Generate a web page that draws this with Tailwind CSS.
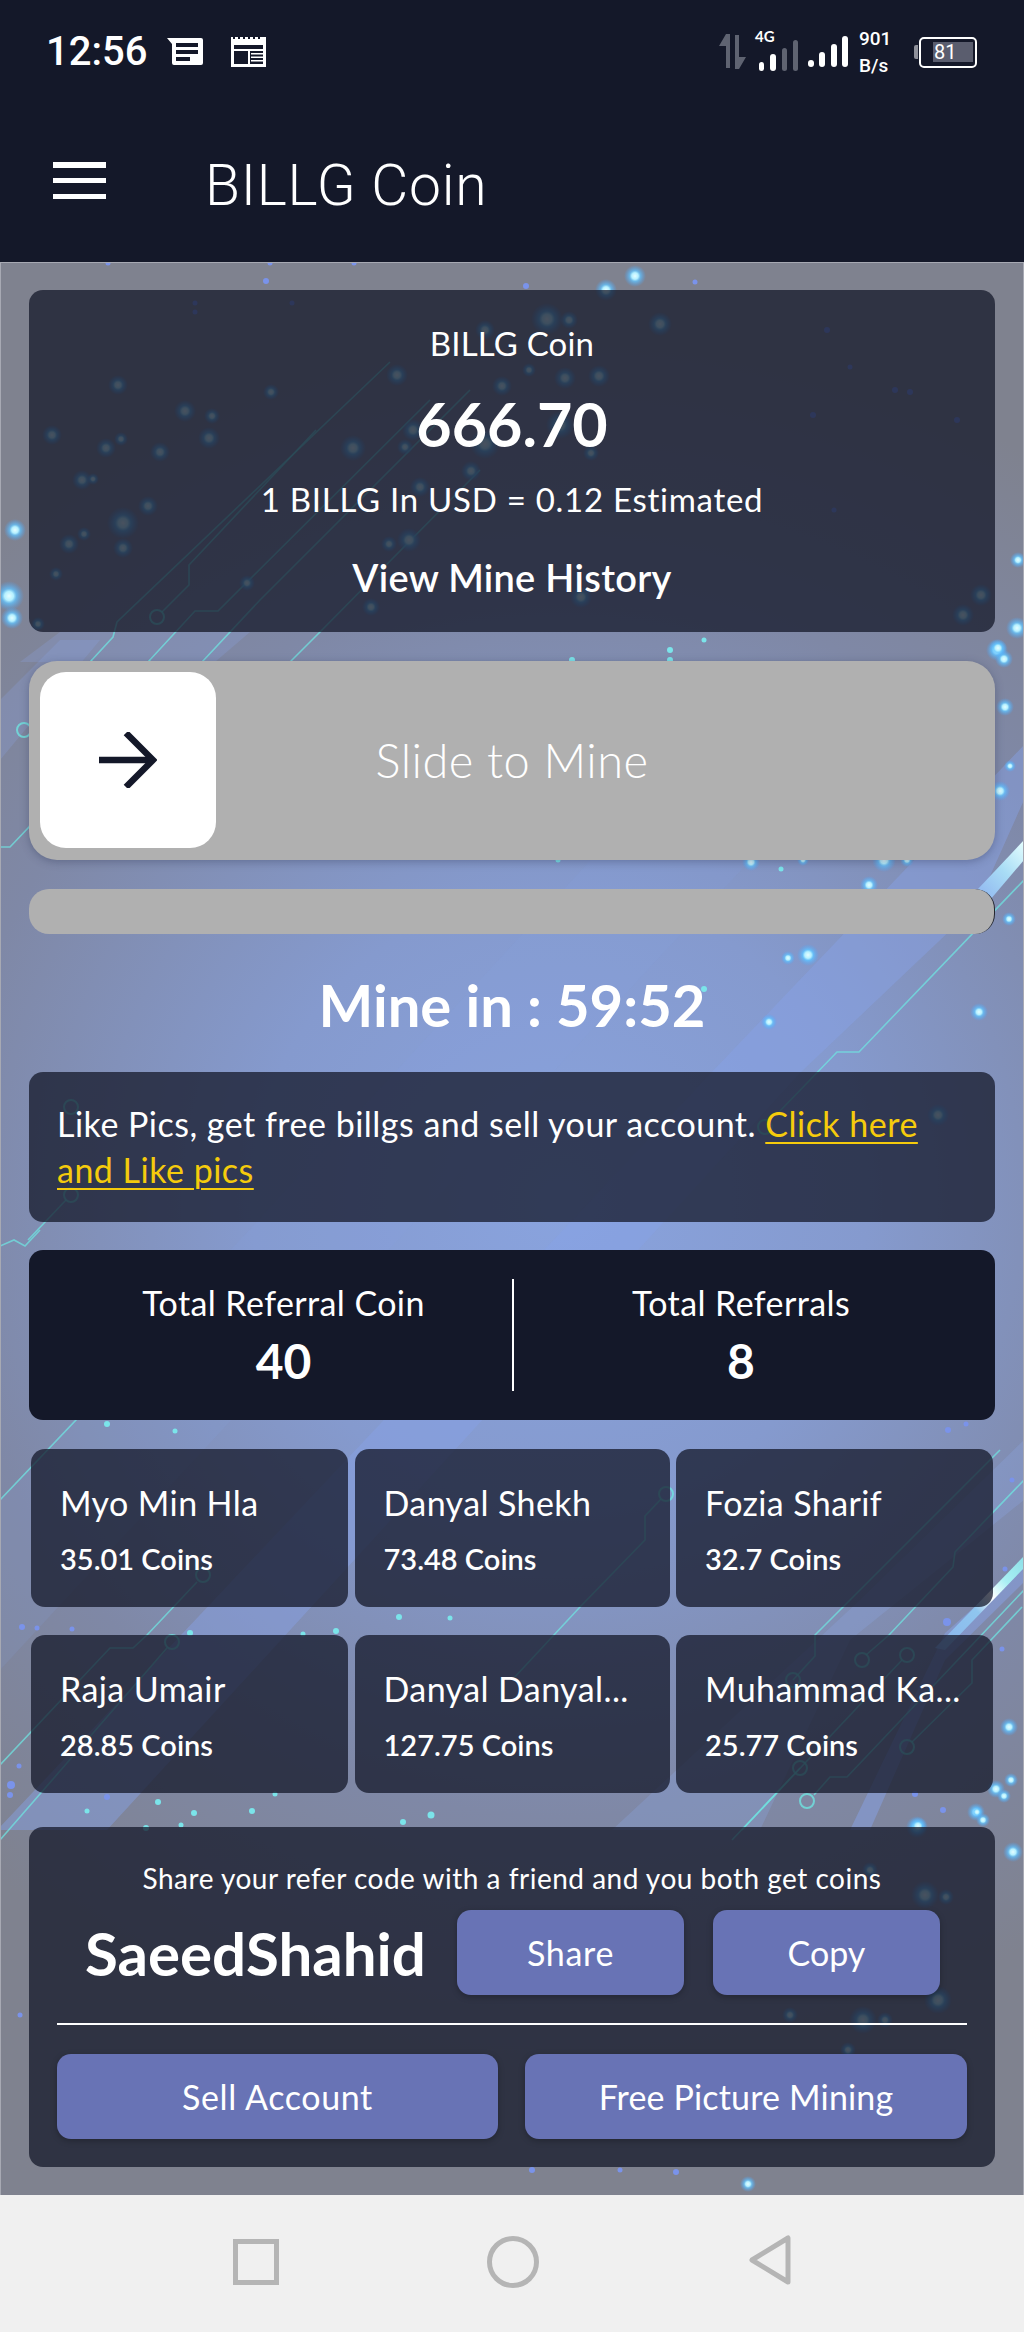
<!DOCTYPE html>
<html lang="en">
<head>
<meta charset="utf-8">
<title>BILLG Coin</title>
<script src="https://cdn.jsdelivr.net/npm/@tailwindcss/browser@4"></script>
</head>
<body class="m-0 bg-[#f0f0f0]">
<div class="flex h-[2332px] w-[1024px] flex-col overflow-hidden font-['Lato',sans-serif] text-white">

  <!-- Status bar + app bar -->
  <header class="flex h-[262px] flex-col bg-[#141829]">
    <div class="flex h-[104px] items-center justify-between pl-[46px] pr-[47px]">
      <div class="flex items-center">
        <span class="font-['Roboto',sans-serif] text-[40px] font-medium leading-none">12:56</span>
        <svg class="ml-[19px]" width="38" height="30" viewBox="0 0 38 30"><path d="M1 1H35a2 2 0 0 1 2 2V26a2 2 0 0 1-2 2H8a2 2 0 0 1-2-2V7Z" fill="#fff"/><path d="M10 6H32V10H10ZM10 13H32V17H10ZM10 20H24V24H10Z" fill="#141829"/></svg>
        <svg class="ml-[26px]" width="37" height="32" viewBox="0 0 37 32"><path d="M1 1H36V31H1Z" fill="#fff"/><path d="M4 9H33V28H4Z" fill="#141829"/><path d="M3 1h2v2H3zM8 1h2v2H8zM13 1h2v2h-2zM18 1h2v2h-2zM23 1h2v2h-2zM28 1h2v2h-2z" fill="#141829"/><path d="M4 13H33V15H4ZM18 14H20V28H18Z" fill="#fff"/><path d="M21 17H33V18.5H21ZM21 20.5H33V22H21ZM21 24H33V25.5H21Z" fill="#fff"/></svg>
      </div>
      <div class="flex items-center">
        <svg width="28" height="36" viewBox="0 0 28 36" fill="#5f6371"><path d="M7 0V34H11V0ZM7 0 0 12H7Z"/><path d="M16 1V35H20V1ZM20 35 27 23H20Z"/></svg>
        <div class="relative ml-[11px] h-[40px] w-[44px]">
          <span class="absolute left-[-3px] top-[-3px] text-[15px] font-bold leading-none">4G</span>
          <svg class="absolute bottom-0 left-0" width="42" height="32" viewBox="0 0 42 32"><rect x="1" y="22" width="5" height="9" rx="2.5" fill="#fff"/><rect x="12" y="14" width="6" height="17" rx="3" fill="#fff"/><rect x="24" y="8" width="5" height="23" rx="2.5" fill="#5f6371"/><rect x="35" y="0" width="5" height="31" rx="2.5" fill="#5f6371"/></svg>
        </div>
        <svg class="ml-[5px]" width="42" height="32" viewBox="0 0 42 32" fill="#fff"><rect x="1" y="24" width="6" height="7" rx="3"/><rect x="12" y="16" width="6" height="15" rx="3"/><rect x="24" y="8" width="6" height="23" rx="3"/><rect x="35" y="0" width="6" height="31" rx="3"/></svg>
        <div class="ml-[10px] flex w-[38px] flex-col font-['Roboto',sans-serif] text-[19px] font-medium leading-[27px]"><span>901</span><span>B/s</span></div>
        <div class="ml-[17px] flex items-center">
          <div class="h-[14px] w-[4px] rounded-l-[2px] bg-[#8f919b]"></div>
          <div class="ml-[1px] flex h-[31px] w-[58px] items-center rounded-[5px] border-[2px] border-white pl-[12px] pr-[2px]">
            <div class="flex h-[20px] w-full items-center justify-start bg-[#5a5d6e] pl-[1px] font-['Roboto',sans-serif] text-[20px] leading-none">81</div>
          </div>
        </div>
      </div>
    </div>
    <div class="flex flex-1 items-start pl-[53px] pt-[58px]">
      <div class="flex h-[37px] w-[53px] flex-col justify-between">
        <div class="h-[5.5px] bg-white"></div>
        <div class="h-[5.5px] bg-white"></div>
        <div class="h-[5.5px] bg-white"></div>
      </div>
      <span class="ml-[99px] mt-[-7px] font-['Roboto',sans-serif] text-[57px] font-light leading-[62px] tracking-[0.8px]">BILLG Coin</span>
    </div>
  </header>

  <!-- Main -->
  <main class="relative h-[1933px] overflow-hidden bg-[#7f828f]">
    <svg class="absolute inset-0 h-full w-full" viewBox="0 262 1024 1933" fill="none">
      <defs>
        <radialGradient id="bgGlow" gradientUnits="userSpaceOnUse" cx="560" cy="1200" r="880">
          <stop offset="0" stop-color="#89a3de"/>
          <stop offset="0.35" stop-color="#859ace"/>
          <stop offset="0.7" stop-color="#7f88a6"/>
          <stop offset="1" stop-color="#7f828f"/>
        </radialGradient>
        <radialGradient id="glow">
          <stop offset="0" stop-color="#e4fdff"/>
          <stop offset="0.3" stop-color="#b5f0ff"/>
          <stop offset="0.5" stop-color="#63c4ff" stop-opacity="0.75"/>
          <stop offset="1" stop-color="#4aa6ff" stop-opacity="0"/>
        </radialGradient>
        <linearGradient id="stripe" gradientUnits="userSpaceOnUse" x1="900" y1="1680" x2="1024" y2="1560">
          <stop offset="0" stop-color="#86a3e8"/>
          <stop offset="0.6" stop-color="#8fc6ef"/>
          <stop offset="0.72" stop-color="#ffffff"/>
          <stop offset="0.84" stop-color="#a8f0f4"/>
          <stop offset="1" stop-color="#8fe0e8"/>
        </linearGradient>
        <linearGradient id="stripe2" gradientUnits="userSpaceOnUse" x1="960" y1="905" x2="1024" y2="840">
          <stop offset="0" stop-color="#84a2ee"/>
          <stop offset="0.6" stop-color="#a8dcf5"/>
          <stop offset="1" stop-color="#e6ffff"/>
        </linearGradient>
      </defs>
      <rect x="0" y="262" width="1024" height="1933" fill="url(#bgGlow)"/>
      <!-- diagonal bands -->
      <path d="M0 1670 650 967 760 850 600 850 0 1500Z" fill="#8aa4e2" fill-opacity="0.14"/>
      <path d="M712 1072 1024 745V800L977 905 801 1072 107 1830H0V1827Z" fill="#87a2e6" fill-opacity="0.45"/>
      <path d="M612 1830 860 1600 1024 1440V1500L850 1640 760 1830Z" fill="#8aa4e2" fill-opacity="0.3"/>
      <path d="M850 1830 945 1633 1024 1563V1582L945 1660 870 1830Z" fill="#87a2e6" fill-opacity="0.5"/>
      <path d="M20 662 60 632H250L215 662Z" fill="#8aa4e2" fill-opacity="0.25"/>
      <path d="M0 700 60 640H100L0 760Z" fill="#8aa4e2" fill-opacity="0.25"/>
      <path d="M945 1650 1024 1568V1556L935 1648Z" fill="url(#stripe)"/>
      <path d="M977 890 1024 840V860L990 900Z" fill="url(#stripe2)"/>
      <!-- circuit lines -->
      <g stroke="#6fe3e0" stroke-width="1.6" stroke-opacity="0.75">
        <path d="M90 662 113 637 117 622 390 362"/>
        <path d="M148 662 195 611H218L430 400"/>
        <path d="M162 612 189 585V565L316 430"/>
        <path d="M202 662 260 600 470 390"/>
        <path d="M290 662 320 632 480 470"/>
        <path d="M0 847H10L29 827 50 790"/>
        <path d="M92 660 70 690"/>
        <path d="M150 660 128 690"/>
        <path d="M28 1240 66 1200"/>
        <path d="M0 1246 14 1240 25 1246 40 1230"/>
        <path d="M0 1500 76 1420 60 1405"/>
        <path d="M0 1765 110 1648H133L147 1635 197 1582"/>
        <path d="M0 1840 167 1648"/>
        <path d="M512 1680 580 1607 645 1540V1516L661 1499"/>
        <path d="M793 1680 815 1656V1635L1000 1450"/>
        <path d="M866 1655 889 1635 953 1567 955 1552 1024 1480"/>
        <path d="M742 1830 902 1660"/>
        <path d="M912 1742 972 1683V1660L1022 1607"/>
        <path d="M732 1840 800 1768"/>
        <path d="M814 1795 830 1777H847L1024 1590"/>
        <path d="M779 1112 837 1052H859L1024 880"/>
      </g>
      <g stroke="#6fe3e0" stroke-width="2" stroke-opacity="0.8">
        <circle cx="157" cy="617" r="7"/>
        <circle cx="24" cy="730" r="7"/>
        <circle cx="71" cy="1107" r="7"/>
        <circle cx="71" cy="1195" r="7"/>
        <circle cx="203" cy="1575" r="7"/>
        <circle cx="172" cy="1642" r="7"/>
        <circle cx="666" cy="1494" r="7"/>
        <circle cx="793" cy="1680" r="7"/>
        <circle cx="862" cy="1660" r="7"/>
        <circle cx="907" cy="1655" r="7"/>
        <circle cx="907" cy="1747" r="7"/>
        <circle cx="800" cy="1768" r="7"/>
        <circle cx="807" cy="1801" r="7"/>
        <circle cx="765" cy="1127" r="7"/>
      </g>
      <!-- glowing dots -->
      <g fill="url(#glow)">
        <circle cx="635" cy="276" r="11"/><circle cx="606" cy="290" r="11"/><circle cx="15" cy="530" r="11"/><circle cx="9" cy="596" r="15"/><circle cx="12" cy="618" r="11"/>
        <circle cx="1017" cy="628" r="11"/><circle cx="997" cy="650" r="11"/><circle cx="1004" cy="659" r="9"/><circle cx="1018" cy="560" r="8"/>
        <circle cx="998" cy="648" r="9"/><circle cx="1005" cy="707" r="9"/><circle cx="1000" cy="791" r="10"/><circle cx="1010" cy="766" r="6"/>
        <circle cx="751" cy="862" r="9"/><circle cx="803" cy="860" r="6"/><circle cx="884" cy="860" r="12"/><circle cx="907" cy="860" r="7"/><circle cx="869" cy="885" r="9"/><circle cx="808" cy="955" r="7"/><circle cx="788" cy="958" r="7"/><circle cx="808" cy="955" r="11"/><circle cx="1009" cy="919" r="7"/><circle cx="979" cy="1012" r="9"/><circle cx="769" cy="1022" r="8"/>
        <circle cx="1009" cy="1727" r="9"/><circle cx="1011" cy="1780" r="7"/><circle cx="996" cy="1789" r="9"/><circle cx="1004" cy="1796" r="7"/><circle cx="976" cy="1812" r="9"/><circle cx="983" cy="1820" r="7"/><circle cx="917" cy="1827" r="11"/><circle cx="1013" cy="1852" r="10"/><circle cx="918" cy="1826" r="9"/><circle cx="748" cy="2184" r="8"/><circle cx="977" cy="1812" r="6"/>
        <circle cx="118" cy="385" r="10"/><circle cx="271" cy="392" r="8"/><circle cx="52" cy="435" r="10"/><circle cx="106" cy="448" r="10"/><circle cx="121" cy="439" r="7"/><circle cx="160" cy="452" r="10"/><circle cx="185" cy="411" r="11"/><circle cx="212" cy="416" r="8"/><circle cx="209" cy="438" r="11"/><circle cx="82" cy="480" r="10"/><circle cx="93" cy="479" r="6"/><circle cx="148" cy="506" r="10"/><circle cx="123" cy="523" r="16"/><circle cx="123" cy="548" r="10"/><circle cx="69" cy="544" r="10"/><circle cx="84" cy="534" r="7"/><circle cx="56" cy="574" r="7"/><circle cx="38" cy="624" r="7"/><circle cx="247" cy="583" r="8"/><circle cx="353" cy="448" r="13"/><circle cx="397" cy="375" r="11"/><circle cx="413" cy="430" r="11"/><circle cx="405" cy="447" r="8"/><circle cx="471" cy="471" r="10"/><circle cx="420" cy="487" r="10"/><circle cx="485" cy="330" r="10"/><circle cx="502" cy="386" r="10"/><circle cx="485" cy="444" r="15"/><circle cx="409" cy="540" r="12"/><circle cx="389" cy="544" r="8"/><circle cx="371" cy="607" r="9"/>
        <circle cx="547" cy="319" r="16"/><circle cx="569" cy="320" r="9"/><circle cx="660" cy="324" r="12"/><circle cx="565" cy="378" r="11"/><circle cx="599" cy="376" r="11"/><circle cx="529" cy="370" r="7"/><circle cx="560" cy="425" r="14"/><circle cx="591" cy="453" r="8"/><circle cx="981" cy="595" r="11"/><circle cx="963" cy="615" r="11"/><circle cx="581" cy="597" r="11"/>
        <circle cx="938" cy="1115" r="11"/><circle cx="870" cy="1870" r="8"/><circle cx="925" cy="1895" r="14"/><circle cx="946" cy="1897" r="8"/><circle cx="790" cy="2015" r="8"/><circle cx="863" cy="2020" r="14"/><circle cx="885" cy="2020" r="8"/><circle cx="938" cy="2000" r="14"/><circle cx="848" cy="2050" r="8"/>
      </g>
      <!-- small dots -->
      <g fill="#7a93ea">
        <circle cx="108" cy="263" r="2.5"/><circle cx="270" cy="263" r="2.5"/><circle cx="354" cy="263" r="2.5"/><circle cx="266" cy="281" r="3"/><circle cx="195" cy="303" r="2.5"/><circle cx="195" cy="312" r="2.5"/><circle cx="292" cy="303" r="2.5"/><circle cx="526" cy="286" r="3"/><circle cx="695" cy="282" r="2.5"/><circle cx="827" cy="330" r="3"/><circle cx="850" cy="367" r="2.5"/><circle cx="813" cy="415" r="3"/><circle cx="834" cy="510" r="2.5"/><circle cx="895" cy="390" r="3"/><circle cx="910" cy="392" r="3"/><circle cx="957" cy="420" r="3"/>
        <circle cx="22" cy="1627" r="3"/><circle cx="37" cy="1628" r="2.5"/><circle cx="72" cy="1629" r="2.5"/><circle cx="11" cy="1785" r="4"/><circle cx="10" cy="1795" r="3"/><circle cx="19" cy="1766" r="2.5"/><circle cx="107" cy="1797" r="3"/><circle cx="947" cy="1622" r="4"/><circle cx="943" cy="1810" r="3"/><circle cx="915" cy="1794" r="3"/><circle cx="1002" cy="1649" r="2.5"/><circle cx="1005" cy="1569" r="2.5"/><circle cx="1012" cy="1480" r="2.5"/><circle cx="948" cy="1430" r="3"/><circle cx="966" cy="1424" r="2.5"/><circle cx="20" cy="2015" r="2.5"/><circle cx="620" cy="2170" r="2.5"/><circle cx="676" cy="2172" r="3"/><circle cx="532" cy="2170" r="3"/>
      </g>
      <g fill="#7be4ea">
        <circle cx="107" cy="1424" r="3"/><circle cx="175" cy="1431" r="2.5"/><circle cx="399" cy="1617" r="3"/><circle cx="450" cy="1618" r="2.5"/><circle cx="336" cy="1631" r="3"/><circle cx="303" cy="1634" r="2.5"/><circle cx="190" cy="1633" r="3"/><circle cx="275" cy="1794" r="2.5"/><circle cx="158" cy="1802" r="3"/><circle cx="194" cy="1813" r="3"/><circle cx="252" cy="1811" r="3"/><circle cx="431" cy="1815" r="3.5"/><circle cx="403" cy="1822" r="3"/><circle cx="146" cy="1828" r="3"/><circle cx="181" cy="1825" r="2.5"/><circle cx="87" cy="1811" r="2.5"/><circle cx="704" cy="989" r="3"/><circle cx="781" cy="869" r="2.5"/><circle cx="558" cy="860" r="2.5"/><circle cx="704" cy="640" r="2.5"/><circle cx="670" cy="650" r="3"/><circle cx="670" cy="660" r="3"/><circle cx="572" cy="660" r="3"/>
      </g>
      <rect x="0.5" y="262.5" width="1023" height="1933" stroke="#a7a9b3" fill="none"/>
    </svg>

    <div class="relative flex flex-col px-[29px] pt-[28px]">
      <!-- Balance -->
      <section class="flex h-[342px] flex-col items-center rounded-[14px] bg-[#141829]/75 pt-[33px]">
        <p class="text-[33px] leading-[40px] tracking-[0.005em]">BILLG Coin</p>
        <p class="mt-[28px] text-[61px] font-bold leading-[66px]">666.70</p>
        <p class="mt-[22px] text-[33px] leading-[40px] tracking-[0.022em]">1 BILLG In USD = 0.12 Estimated</p>
        <p class="mt-[35px] text-[38px] font-semibold leading-[46px] tracking-[0.008em]">View Mine History</p>
      </section>

      <!-- Slider -->
      <section class="relative mt-[29px] flex h-[199px] items-center justify-center rounded-[28px] bg-[#b0b0b0] shadow-[0_2px_8px_rgba(40,50,80,0.35)]">
        <span class="text-[47px] font-light leading-none tracking-[0.01em]">Slide to Mine</span>
        <div class="absolute left-[11px] top-[11px] flex h-[176px] w-[176px] items-center justify-center rounded-[26px] bg-white">
          <svg width="58" height="56" viewBox="0 0 58 56" fill="none" stroke="#141829" stroke-width="6.5"><path d="M0 28H54"/><path d="M27 1 54 28 27 55" stroke-linejoin="miter"/></svg>
        </div>
      </section>

      <div class="mt-[29px] h-[45px] rounded-[20px] border-r border-[#23262f] bg-[#b0b0b0]"></div>

      <p class="flex h-[138px] items-center justify-center pt-[3px] text-[58px] font-bold leading-none">Mine in : 59:52</p>

      <!-- Banner -->
      <section class="h-[150px] rounded-[14px] bg-[#141829]/75 px-[28px] py-[29px] text-[34px] leading-[46px] tracking-[0.0145em]">
        Like Pics, get free billgs and sell your account. <a class="text-[#f5cb0c] underline decoration-[2px] underline-offset-[5px]">Click here<br>and Like pics</a>
      </section>

      <!-- Stats -->
      <section class="mt-[28px] flex h-[170px] items-center rounded-[14px] bg-[#141829]">
        <div class="flex w-[483px] flex-col items-center pl-[26px]">
          <span class="text-[34px] leading-[40px] tracking-[0.012em]">Total Referral Coin</span>
          <span class="mt-[12px] text-[48px] font-bold leading-[52px]">40</span>
        </div>
        <div class="h-[112px] w-[2px] bg-white"></div>
        <div class="flex flex-1 flex-col items-center pr-[27px]">
          <span class="text-[34px] leading-[40px] tracking-[0.012em]">Total Referrals</span>
          <span class="mt-[12px] text-[48px] font-bold leading-[52px]">8</span>
        </div>
      </section>

      <!-- Referrals -->
      <section class="mt-[29px] grid grid-cols-[317px_315px_317px] gap-x-[6.5px] gap-y-[28px] px-[2px]">
        <div class="h-[158px] rounded-[14px] bg-[#141829]/75 pl-[29px] pt-[34px]"><p class="text-[34px] leading-[40px] tracking-[0.012em]">Myo Min Hla</p><p class="mt-[17px] text-[29px] font-semibold leading-[38px]">35.01 Coins</p></div>
        <div class="h-[158px] rounded-[14px] bg-[#141829]/75 pl-[29px] pt-[34px]"><p class="text-[34px] leading-[40px] tracking-[0.012em]">Danyal Shekh</p><p class="mt-[17px] text-[29px] font-semibold leading-[38px]">73.48 Coins</p></div>
        <div class="h-[158px] rounded-[14px] bg-[#141829]/75 pl-[29px] pt-[34px]"><p class="text-[34px] leading-[40px] tracking-[0.012em]">Fozia Sharif</p><p class="mt-[17px] text-[29px] font-semibold leading-[38px]">32.7 Coins</p></div>
        <div class="h-[158px] rounded-[14px] bg-[#141829]/75 pl-[29px] pt-[34px]"><p class="text-[34px] leading-[40px] tracking-[0.012em]">Raja Umair</p><p class="mt-[17px] text-[29px] font-semibold leading-[38px]">28.85 Coins</p></div>
        <div class="h-[158px] rounded-[14px] bg-[#141829]/75 pl-[29px] pt-[34px]"><p class="text-[34px] leading-[40px] tracking-[0.012em]">Danyal Danyal...</p><p class="mt-[17px] text-[29px] font-semibold leading-[38px]">127.75 Coins</p></div>
        <div class="h-[158px] rounded-[14px] bg-[#141829]/75 pl-[29px] pt-[34px]"><p class="text-[34px] leading-[40px] tracking-[0.012em]">Muhammad Ka...</p><p class="mt-[17px] text-[29px] font-semibold leading-[38px]">25.77 Coins</p></div>
      </section>

      <!-- Share -->
      <section class="mt-[34px] flex h-[340px] flex-col rounded-[14px] bg-[#141829]/75 px-[28px] pt-[31px]">
        <p class="text-center text-[28px] leading-[40px] tracking-[0.018em]">Share your refer code with a friend and you both get coins</p>
        <div class="mt-[12px] flex h-[85px] items-center">
          <span class="ml-[28px] w-[372px] text-[60px] font-bold leading-none">SaeedShahid</span>
          <button class="flex h-[85px] w-[227px] items-center justify-center rounded-[14px] bg-[#6873b5] text-[34px] tracking-[0.02em] shadow-[0_2px_6px_rgba(0,0,0,0.25)]">Share</button>
          <button class="ml-[29px] flex h-[85px] w-[227px] items-center justify-center rounded-[14px] bg-[#6873b5] text-[34px] shadow-[0_2px_6px_rgba(0,0,0,0.25)]">Copy</button>
        </div>
        <div class="mt-[28px] h-[2px] bg-white"></div>
        <div class="mt-[29px] flex justify-between">
          <button class="flex h-[85px] w-[441px] items-center justify-center rounded-[14px] bg-[#6873b5] text-[34px] tracking-[0.018em] shadow-[0_2px_6px_rgba(0,0,0,0.25)]">Sell Account</button>
          <button class="flex h-[85px] w-[442px] items-center justify-center rounded-[14px] bg-[#6873b5] text-[34px] tracking-[0.005em] shadow-[0_2px_6px_rgba(0,0,0,0.25)]">Free Picture Mining</button>
        </div>
      </section>
    </div>
  </main>

  <!-- Android nav -->
  <nav class="relative flex h-[137px] items-start bg-[#f0f0f0] pt-[44px]">
    <svg class="ml-[233px]" width="46" height="46" viewBox="0 0 46 46" fill="none" stroke="#b5b5b5" stroke-width="5"><rect x="2.5" y="2.5" width="41" height="41"/></svg>
    <svg class="ml-[208px] mt-[-3px]" width="52" height="52" viewBox="0 0 52 52" fill="none" stroke="#b5b5b5" stroke-width="5"><circle cx="26" cy="26" r="23.5"/></svg>
    <svg class="ml-[208px] mt-[-5px]" width="44" height="52" viewBox="0 0 44 52" fill="none" stroke="#b5b5b5" stroke-width="5"><path d="M41 4V48L5 26Z" stroke-linejoin="round"/></svg>
  </nav>
</div>
</body>
</html>
